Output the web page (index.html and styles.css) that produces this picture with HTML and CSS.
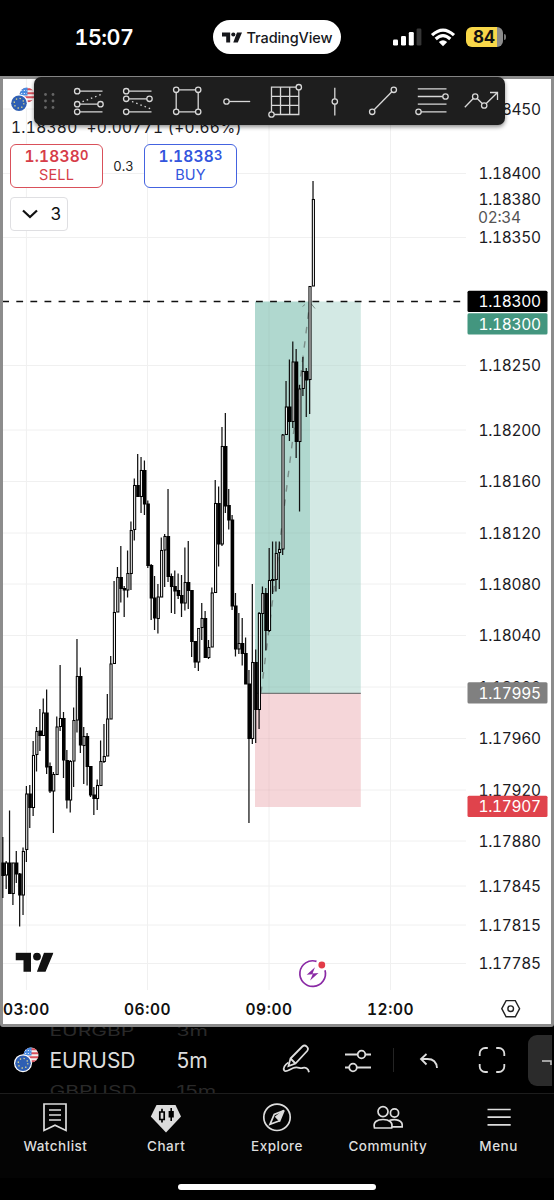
FILE: index.html
```html
<!doctype html>
<html lang="en">
<head>
<title>EURUSD 1.18380</title>
<meta charset="utf-8" />
<meta name="viewport" content="width=device-width, initial-scale=1" />
<link rel="stylesheet" href="styles.css">
</head>

<body>
<svg class="defs" width="0" height="0">
<defs>
<clipPath id="us-clip"><circle cx="17" cy="8" r="7.5"/></clipPath>
<symbol id="flags" viewBox="0 0 26 26">
<g clip-path="url(#us-clip)">
<rect x="9" width="17" height="16" fill="#f3f0f0"/>
<path d="M9 2.2h17M9 6.2h17M9 10.2h17M9 14.2h17" stroke="#d8505c" stroke-width="2"/>
<rect x="9" width="8.5" height="8.5" fill="#4a8be0"/>
<path d="M11 3.5h6M11 6.5h6" stroke="#dbe8fa" stroke-width="1.2" stroke-dasharray="1.2 1.6"/>
</g>
<circle class="flag-gap" cx="9" cy="16.2" r="9"/>
<circle cx="9" cy="16.2" r="7.8" fill="#2f5fb3"/>
<circle cx="9" cy="16.2" r="4.8" fill="none" stroke="#e9dd86" stroke-width="1.3" stroke-dasharray="1.3 2.47"/>
</symbol>
<symbol id="tv" viewBox="0 0 38 20">
<path d="M0 .5h15.5v19H8V8H0zM28.5 .5H38l-8 19h-8.600z"/>
<circle cx="21.500" cy="4.300" r="3.900"/>
</symbol>
</defs>
</svg>

<header class="status">
<span class="clock">15:07</span>
<div class="pill">
<svg width="20" height="11"><use href="#tv"/></svg>
<span>TradingView</span>
</div>
<svg class="signal" width="29" height="18" viewBox="0 0 29 18">
<rect x="0" y="11.500" width="5" height="6" rx="1.300" fill="#fff"/>
<rect x="8" y="8" width="5" height="9.500" rx="1.300" fill="#fff"/>
<rect x="15.800" y="4" width="5" height="13.500" rx="1.300" fill="#fff"/>
<rect x="23.600" y="0.500" width="4.800" height="17" rx="1.300" fill="#363636"/>
</svg>
<svg class="wifi" width="26" height="19" viewBox="0 0 26 19">
<path d="M2 7.200Q13 -3 24 7.200M5.700 11Q13 4.300 20.300 11" fill="none" stroke="#fff" stroke-width="3.200"/>
<path d="M8.800 13.900Q13 10.400 17.200 13.900L13 18.300z" fill="#fff"/>
</svg>
<div class="battery"><span>84</span></div>
</header>

<main class="chart">
<svg id="plot" class="plot" width="554" height="951" viewBox="0 76 554 951">
<g id="grid"></g>
<g id="position">
<rect x="255" y="301.500" width="55.500" height="391.500" fill="#b0d8cf"/>
<rect x="310.500" y="301.500" width="50.300" height="391.500" fill="#d3e9e4"/>
<rect x="255" y="693" width="105.800" height="114" fill="#f5d6d9"/>
<path class="overlay-grid" d="M255 365.500h105.800M255 430h105.800M255 481.500h105.800M255 533h105.800M255 584h105.800M255 635.500h105.800M255 687h105.800M255 738.500h105.800M255 790h105.800M269 302v505"/>
<path d="M255 693.300h105.800" stroke="#777" stroke-width="1.200"/>
<path d="M261 693L309.500 305" stroke="#7a8d88" stroke-width="1.400" stroke-dasharray="6.500 8" fill="none"/>
<path d="M302.500 306.500l2.500-2M311 303.500l4 5" stroke="#7a8d88" fill="none"/>
</g>
<path d="M3 301.500H466" stroke="#111" stroke-width="1.500" stroke-dasharray="6.800 7.300" stroke-dashoffset="0.800"/>
<g id="candles"></g>
<g id="prices" class="prices"></g>
<g id="times" class="times"></g>
<use href="#tv" x="15.500" y="952.300" width="38" height="20" fill="#111"/>
<g class="event">
<path d="M316.500 961.400A12.800 12.800 0 1 0 325 970.200" fill="#fff" stroke="#8a2aa5" stroke-width="1.700"/>
<path d="M315 967.300l-8.300 7.400 6-.4-2.600 6.300 8.400-7.500-6 .4z" fill="#8a2aa5"/>
<circle cx="321.800" cy="965" r="3.400" fill="#e23c48"/>
</g>
<g fill="none" stroke="#222" stroke-width="1.400">
<path d="M501.800 1008.700l4.300-8.100h9.200l4.300 8.100-4.300 8.100h-9.200z"/>
<circle cx="510.700" cy="1008.700" r="2.800"/>
</g>
</svg>

<section class="legend">
<svg class="legend-flags" width="26" height="26"><use href="#flags"/></svg>
<p class="quote">1.18380&nbsp; +0.00771 (+0.66%)</p>
<div class="orders">
<button class="order sell"><b>1.1838<sup>0</sup></b><span>SELL</span></button>
<span class="spread">0.3</span>
<button class="order buy"><b>1.1838<sup>3</sup></b><span>BUY</span></button>
</div>
<button class="indicators">
<svg width="16" height="10" viewBox="0 0 16 10"><path d="M1 1.500l7 6.500 7-6.500" fill="none" stroke="#111" stroke-width="2.200"/></svg>
<span>3</span>
</button>
</section>

<nav class="tools">
<svg class="handle" width="30" height="48" viewBox="0 0 30 48">
<circle cx="11.500" cy="17.500" r="1.400"/><circle cx="19" cy="17.500" r="1.400"/>
<circle cx="11.500" cy="24" r="1.400"/><circle cx="19" cy="24" r="1.400"/>
<circle cx="11.500" cy="30.500" r="1.400"/><circle cx="19" cy="30.500" r="1.400"/>
</svg>
<svg viewBox="0 0 49 48">
<path d="M16 14.200h22.500M16 27.200h18M16 34.800h22.500"/>
<path d="M18.500 24.700L37 17.500" stroke-dasharray="1.500 3"/>
<circle cx="13.200" cy="14.200" r="2.700"/><circle cx="13.200" cy="27.200" r="2.700"/><circle cx="36.500" cy="27.200" r="2.700"/><circle cx="13.200" cy="34.800" r="2.700"/>
</svg>
<svg viewBox="0 0 49 48">
<path d="M16 14.200h22.500M16 21.800h18M16 34.800h22.500"/>
<path d="M19 24.500L38 32" stroke-dasharray="1.500 3"/>
<circle cx="13.200" cy="14.200" r="2.700"/><circle cx="13.200" cy="21.800" r="2.700"/><circle cx="36.500" cy="21.800" r="2.700"/><circle cx="13.200" cy="34.800" r="2.700"/>
</svg>
<svg viewBox="0 0 49 48">
<path d="M14.200 12.800h22v22h-22z"/>
<circle cx="14.200" cy="12.800" r="2.700"/><circle cx="36.200" cy="12.800" r="2.700"/><circle cx="14.200" cy="34.800" r="2.700"/><circle cx="36.200" cy="34.800" r="2.700"/>
</svg>
<svg viewBox="0 0 49 48">
<path d="M18 24.500h21.200"/><circle cx="15.500" cy="24.500" r="2.700"/>
</svg>
<svg viewBox="0 0 49 48">
<path d="M11.500 10.200h27.300v27.300H11.500zM20.500 10.200v27.300M29.700 10.200v27.300M11.500 19.300h27.300M11.500 28.400h27.300"/>
<circle cx="38.800" cy="10.200" r="2.700"/><circle cx="11.500" cy="37.500" r="2.700"/>
</svg>
<svg viewBox="0 0 49 48">
<path d="M25.800 10.800v27.700"/><circle cx="25.800" cy="24.500" r="2.700"/>
</svg>
<svg viewBox="0 0 49 48">
<path d="M14.200 34.800l21.600-22"/><circle cx="14.200" cy="34.800" r="2.700"/><circle cx="35.800" cy="12.800" r="2.700"/>
</svg>
<svg viewBox="0 0 49 48">
<path d="M10.800 11.800h28.700M10.800 19.500h28.700M10.800 27.200h28.700M10.800 34.800h28.700"/>
<circle cx="38.500" cy="19.500" r="2.700"/><circle cx="11.500" cy="34.800" r="2.700"/>
</svg>
<svg viewBox="0 0 49 48">
<path d="M8.800 30.200l10.400-10.700 9 9 13.300-13M34 15.500h7.500V23"/>
<circle cx="19.200" cy="19.500" r="2.700"/><circle cx="28.200" cy="28.500" r="2.700"/>
</svg>
</nav>
</main>

<section class="symbolbar">
<svg class="bar-flags" width="26" height="26"><use href="#flags"/></svg>
<div class="wheel wheel-symbol">
<span class="faded">EURGBP</span>
<span>EURUSD</span>
<span class="faded">GBPUSD</span>
</div>
<div class="wheel wheel-time">
<span class="faded">3m</span>
<span>5m</span>
<span class="faded">15m</span>
</div>
<div class="actions">
<svg width="30" height="32" viewBox="0 0 30 32">
<path d="M9.500 14.500L21.300 2.500a3.300 3.300 0 0 1 4.800 4.500L14.500 19.500l-7 2.500zM9.500 14.500l5 5"/>
<path d="M7.500 18.500C4 20.500 1.700 24.200 3.200 26.500c2 2.300 5-1 9-2.500 5-1.800 6.500 1 9.500-.1 2.700-1 5.500.6 6.300 4.300"/>
</svg>
<svg width="30" height="32" viewBox="0 0 30 32">
<path d="M2 10.500h13M22 10.500h6M2 23.500h4.500M13.500 23.500H28"/>
<circle cx="18.500" cy="10.500" r="3.800"/><circle cx="10" cy="23.500" r="3.800"/>
</svg>
<i class="divider"></i>
<svg width="30" height="32" viewBox="0 0 30 32">
<path d="M11.500 10l-5.500 5 5.500 5.500M6 15h6.500c5.500 0 9 3 9.500 9"/>
</svg>
<svg width="30" height="32" viewBox="0 0 30 32">
<path d="M2.700 12V9.500a5.500 5.500 0 0 1 5.500-5.500h2.600M19.200 4h2.600a5.500 5.500 0 0 1 5.500 5.500V12M27.300 20v2.500a5.500 5.500 0 0 1-5.500 5.500h-2.600M10.800 28H8.200a5.500 5.500 0 0 1-5.500-5.500V20"/>
</svg>
</div>
<div class="more">
<svg width="10" height="10" viewBox="0 0 10 10"><path d="M0 6h9v4"/></svg>
</div>
</section>

<nav class="tabs">
<a>
<svg width="32" height="32" viewBox="0 0 32 32"><path d="M5 3h22v26.500l-11-5.200-11 5.200zM10 9h12M10 14h12M10 19h12"/></svg>
<span>Watchlist</span>
</a>
<a>
<svg width="32" height="32" viewBox="0 0 32 32">
<path d="M6.500 4h19L31 15.500 16 31.500.8 15.500z" fill="#ddd" stroke="none"/>
<path d="M9.800 11h4.400v7.500H9.800zM12 7.800V11M12 18.500v3" stroke="#000"/>
<path d="M18.600 10h5.200v6.500h-5.200zM20.400 7h1.600v13h-1.600z" fill="#000" stroke="none"/>
</svg>
<span>Chart</span>
</a>
<a>
<svg width="32" height="32" viewBox="0 0 32 32">
<circle cx="16" cy="16.300" r="13.200"/>
<path d="M23 9.500l-4.300 10.200-3.700-3.800z" fill="#ddd"/>
<path d="M23 9.500L13.200 13.500 9 23.300l9.700-3.600"/>
</svg>
<span>Explore</span>
</a>
<a>
<svg width="32" height="32" viewBox="0 0 32 32">
<circle cx="11" cy="10.600" r="5"/><circle cx="22.500" cy="12" r="4.100"/>
<path d="M2.500 27c-1.700-6 2.500-8.500 8.500-8.500s10.200 2.500 8.700 8.500zM17.500 19.300c6-1.500 13.700-.5 12.700 6.500h-10"/>
</svg>
<span>Community</span>
</a>
<a>
<svg width="32" height="32" viewBox="0 0 32 32"><path d="M4.500 8.500h23.200M4.500 16.200h23.200M4.500 23.800h23.200"/></svg>
<span>Menu</span>
</a>
</nav>
<div class="home"></div>
<script src="chart.js"></script>
</body>
</html>
```
FILE: styles.css
```css
body {
margin: 0;
width: 554px;
height: 1200px;
overflow: hidden;
background: #000;
color: #ddd;
font-family: Inter, "Liberation Sans", Arial, sans-serif;
font-variant-numeric: tabular-nums;
display: flex;
flex-direction: column;
}

.defs { position: absolute; }

button {
background: #fff;
font-family: inherit;
font-variant-numeric: inherit;
padding: 0;
box-sizing: border-box;
}

/* status bar */
.status {
height: 76px;
flex: none;
display: flex;
align-items: center;
box-sizing: border-box;
padding: 0 0 1.500px 74.500px;
color: #fff;
}
.clock {
width: 138.500px;
font-size: 21.500px;
font-weight: 600;
letter-spacing: -0.5px;
}
.pill {
width: 128px;
height: 34px;
border-radius: 17px;
background: #fff;
color: #16171c;
fill: #16171c;
display: flex;
align-items: center;
justify-content: center;
gap: 5px;
font-size: 14.500px;
font-weight: 500;
letter-spacing: -0.1px;
}
.signal { margin-left: 52px; }
.wifi { margin-left: 8px; }
.battery {
position: relative;
margin-left: 9.500px;
width: 37px;
height: 20px;
border-radius: 6px;
background: linear-gradient(90deg, #f8d749 31px, #8c8c8c 31px);
color: #111;
font-size: 17px;
font-weight: 700;
line-height: 20px;
text-align: center;
}
.battery::after {
content: "";
position: absolute;
right: -3px;
top: 7px;
width: 2px;
height: 6px;
border-radius: 0 2px 2px 0;
background: #777;
}

/* chart */
.chart {
position: relative;
flex: none;
height: 951px;
box-sizing: border-box;
border: 3px solid #8c8c8c;
border-radius: 0 0 3px 3px;
background: #fff;
}
.plot {
display: block;
margin: -3px;
}
.grid-line { stroke: #f0f0f0; stroke-width: 1; }
.overlay-grid { stroke: #000; stroke-opacity: 0.03; fill: none; }
.wick { stroke: #111; stroke-width: 1.250; }
.up { fill: #fff; stroke: #000; stroke-width: 1.050; }
.down { fill: #000; }
.prices text { font-size: 15.500px; fill: #1b1b1f; }
.prices .countdown { fill: #555; }
.prices .tagged { fill: #fff; }
.times text { font-size: 15.500px; font-weight: 600; fill: #111; }

.legend {
position: absolute;
left: 7px;
top: 8px;
}
.flag-gap { fill: #fff; }
.legend-flags { display: block; }
.quote {
margin: 5px 0 0 1px;
font-size: 15.500px;
line-height: 20px;
color: #1b1b1f;
letter-spacing: 0.3px;
white-space: nowrap;
}
.orders {
display: flex;
align-items: center;
margin-top: 6px;
}
.order {
width: 93px;
height: 44px;
border: 1.500px solid;
border-radius: 6px;
display: flex;
flex-direction: column;
align-items: center;
justify-content: center;
}
.order b {
font-size: 15.500px;
font-weight: 600;
line-height: 18px;
letter-spacing: 0.2px;
}
.order sup {
font-size: 13px;
line-height: 0;
vertical-align: 2.500px;
}
.order span {
font-size: 14.500px;
line-height: 18px;
letter-spacing: 0.2px;
}
.sell { color: #d63d49; border-color: #d9505a; }
.buy { color: #3355dd; border-color: #4463e0; }
.spread {
width: 41px;
text-align: center;
font-size: 13px;
color: #222;
}
.indicators {
margin-top: 9px;
width: 58px;
height: 34px;
border: 1.500px solid #dfdfe2;
border-radius: 4px;
display: flex;
align-items: center;
justify-content: center;
gap: 12px;
padding-left: 6px;
color: #111;
font-size: 17px;
}

.tools {
position: absolute;
left: 30.500px;
top: -2.500px;
width: 471px;
height: 48px;
border-radius: 7px;
background: #1e1e1e;
box-shadow: 0 2px 4px rgba(0,0,0,0.45);
display: flex;
}
.tools svg:not(.handle) {
width: 49px;
height: 48px;
fill: none;
stroke: #d8d8d8;
stroke-width: 1.300;
}
.tools svg circle { fill: #1e1e1e; }
.tools .handle circle { fill: #656565; }

/* symbol picker and chart actions */
.symbolbar {
flex: none;
height: 66px;
display: flex;
align-items: center;
overflow: hidden;
border-bottom: 1px solid #1d1d1d;
}
.bar-flags { margin-left: 14px; }
.bar-flags .flag-gap { fill: #000; }
.wheel {
display: flex;
flex-direction: column;
font-size: 21px;
font-variant-numeric: normal;
line-height: 30px;
padding-top: 1px;
}
.wheel-symbol { width: 127px; margin-left: 9.500px; }
.wheel-time { width: 103.500px; }
.faded {
color: #292929;
transform: scaleY(0.7);
}
.actions {
display: flex;
align-items: center;
width: 248px;
flex: none;
padding-left: 1px;
box-sizing: border-box;
}
.actions svg {
fill: none;
stroke: #ddd;
stroke-width: 1.800;
flex: none;
}
.actions svg:nth-of-type(2) { margin-left: 32px; }
.divider {
width: 1px;
height: 24px;
margin: 0 21px 0 20px;
background: #242424;
}
.actions svg:nth-of-type(4) { margin-left: 32px; }
.more {
flex: none;
width: 24px;
height: 51px;
border-radius: 9px 0 0 9px;
background: #2b2b2b;
display: flex;
align-items: center;
justify-content: flex-end;
}
.more svg { fill: none; stroke: #ccc; stroke-width: 1.500; }

/* bottom tabs */
.tabs {
flex: none;
height: 84px;
display: flex;
background: #040404;
}
.tabs a {
flex: 1;
display: flex;
flex-direction: column;
align-items: center;
padding-top: 7px;
font-size: 13.500px;
font-weight: 500;
letter-spacing: 0.5px;
}
.tabs svg { fill: none; stroke: #ddd; stroke-width: 1.700; }
.tabs span { margin-top: 4px; line-height: 18px; }
.home {
width: 198px;
height: 6px;
margin: 5.500px auto 0;
border-radius: 3px;
background: #fff;
}
```
FILE: chart.js
```js
const NS = 'http://www.w3.org/2000/svg'
const $ = q => document.querySelector(q)
const add = (parent, tag, attrs, text) => {
const el = document.createElementNS(NS, tag)
for (const k in attrs) el.setAttribute(k, attrs[k])
if (text) el.textContent = text
$(parent).appendChild(el)
}

// price scale: [y, label]
const prices = [
[109, '1.18450'], [173.5, '1.18400'], [237.5, '1.18350'], [365.5, '1.18250'],
[430, '1.18200'], [481.5, '1.18160'], [533, '1.18120'], [584, '1.18080'],
[635.5, '1.18040'], [687, '1.18000'], [738.5, '1.17960'], [790, '1.17920'],
[841, '1.17880'], [886, '1.17845'], [925, '1.17815'], [963.5, '1.17785']
]
const times = [[26.4, '03:00'], [147.5, '06:00'], [269, '09:00'], [390.5, '12:00']]
const tags = [
[301.5, '1.18300', '#000'], [324, '1.18300', '#43967f'],
[693, '1.17995', '#808080'], [806.5, '1.17907', '#e0434c']
]
const label = (y, text, cls) =>
add('#prices', 'text', { x: 478.5, y: y + 5.7, textLength: 62.5, class: cls || '' }, text)

prices.forEach(([y, text]) => {
add('#grid', 'path', { d: `M3 ${y}H466`, class: 'grid-line' })
label(y, text)
})
label(199.5, '1.18380')
add('#prices', 'text', { x: 478, y: 223, textLength: 43, class: 'countdown' }, '02:34')
tags.forEach(([y, text, fill]) => {
add('#prices', 'rect', { x: 467.5, y: y - 10.8, width: 80, height: 21.3, rx: 1.5, fill })
label(y, text, 'tagged')
})
times.forEach(([x, text]) => {
add('#grid', 'path', { d: `M${x} 79V990`, class: 'grid-line' })
add('#times', 'text', { x: x - 23.5, y: 1014.5, textLength: 46.5 }, text)
})

// high, body top, body bottom, low, 1 = up
const bars = [
[837,863,875.5,898,0],[861,863,875,889,1],[810.5,863,893.5,894,0],[863,863,893.5,905,1],
[851,863,874,883,0],[873,874,895,926.5,0],[847.5,851.5,895,915,1],[786,794,849.5,862,1],
[785,794,807.5,828,0],[741,755.5,807.5,816,1],[727,731.5,754.5,771.5,1],[709,731,735.5,751,0],
[698.5,713,735.5,735.5,1],[689.5,713,767,774,0],[762.5,766.5,791,793,0],[772,774.5,791,833,1],
[716.5,727,774.5,774.5,1],[665,718.5,726.5,731,1],[712,718.5,760,778,0],[750,760.5,800,808.5,0],
[760,761.5,800,812.5,1],[707.5,720.5,761,787,1],[639,676.5,720,732.5,1],[667.5,676.5,745,753,0],
[727,736.5,745.5,784,1],[733,736.5,766.5,785.5,0],[766.5,766.5,795,797,0],[787,795,798.5,815,0],
[779.5,785.5,798.5,810,1],[740.5,761.5,785.5,785.5,1],[724,756.5,761.5,763,1],[694,719,756,756,1],
[656,664,719,719,1],[581,612.5,663.5,664,1],[567,577.5,612,612,1],[546,577.5,588.5,602.5,0],
[586,588.5,590,617,0],[550.5,573.5,590,597.5,1],[521.5,530.5,573.5,590,1],[478.5,485.5,529.5,540.5,1],
[454,485.5,496.5,497,0],[457,470.5,496.5,513,1],[460.5,470.5,504,515,0],[500.5,504,565.5,568,0],
[564,565.5,598,620,0],[576,598,618,630,0],[584,597,618.5,633.5,1],[537.5,550.5,597,597,1],
[534,536.5,550,587,1],[489,536.5,576.5,582,0],[573.5,576.5,586.5,613,0],[570.5,586.5,591,614,0],
[573.5,590.5,595.5,599,0],[575,595.5,603,617,0],[547.5,582.5,603,610.5,1],[541,582.5,590.5,609,0],
[590,590.5,641.5,657,0],[641.5,641.5,662,668,0],[628,628.5,662,671,1],[603,618.5,627.5,640,1],
[611,618.5,657.5,658,0],[640,647.5,657.5,659,1],[587.5,593,647,647,1],[480,503.5,592.5,593,1],
[486.5,503.5,544,566.5,0],[427,446.5,544,546,1],[413,446.5,506,513,0],[489,505.5,520,529.5,0],
[515,520,606,610,0],[593,606,649,656.5,0],[613,643.5,649,654,1],[618,643.5,653.5,665.5,0],
[637.5,653.5,684,684,0],[670,684,738.5,823,0],[584,662.5,738.5,744,1],[649.5,662.5,709.5,743,0],
[612,613.5,709.5,729,1],[586.5,593.5,613.5,672,1],[588,593.5,630.5,650.5,0],[548,580.5,630.5,632,1],
[541.5,579.5,580.5,594,0],[541.5,553.5,579.5,591.5,1],[541.5,549.5,552.5,589,1],[434,435,549,555,1],
[381,407,434.5,435,1],[359.5,407,421.5,441,0],[341.5,362,421.5,428,1],[349,362,441.5,458,0],
[385,389,441.5,511.5,1],[357,371.5,388.5,396,1],[368,371.5,380,417,0],[286,286.5,379.5,414,1],
[181,199.5,286,286,1]
]
bars.forEach(([high, top, bottom, low, up], i) => {
const x = 26.4 + 3.372 * (i - 7)
add('#candles', 'path', { d: `M${x} ${high}V${low}`, class: 'wick' })
add('#candles', 'rect', up
? { x: x - 0.7, y: top, width: 2.1, height: bottom - top, class: 'up' }
: { x: x - 1.5, y: top - 0.5, width: 3.6, height: bottom - top + 1, class: 'down' })
})
```
